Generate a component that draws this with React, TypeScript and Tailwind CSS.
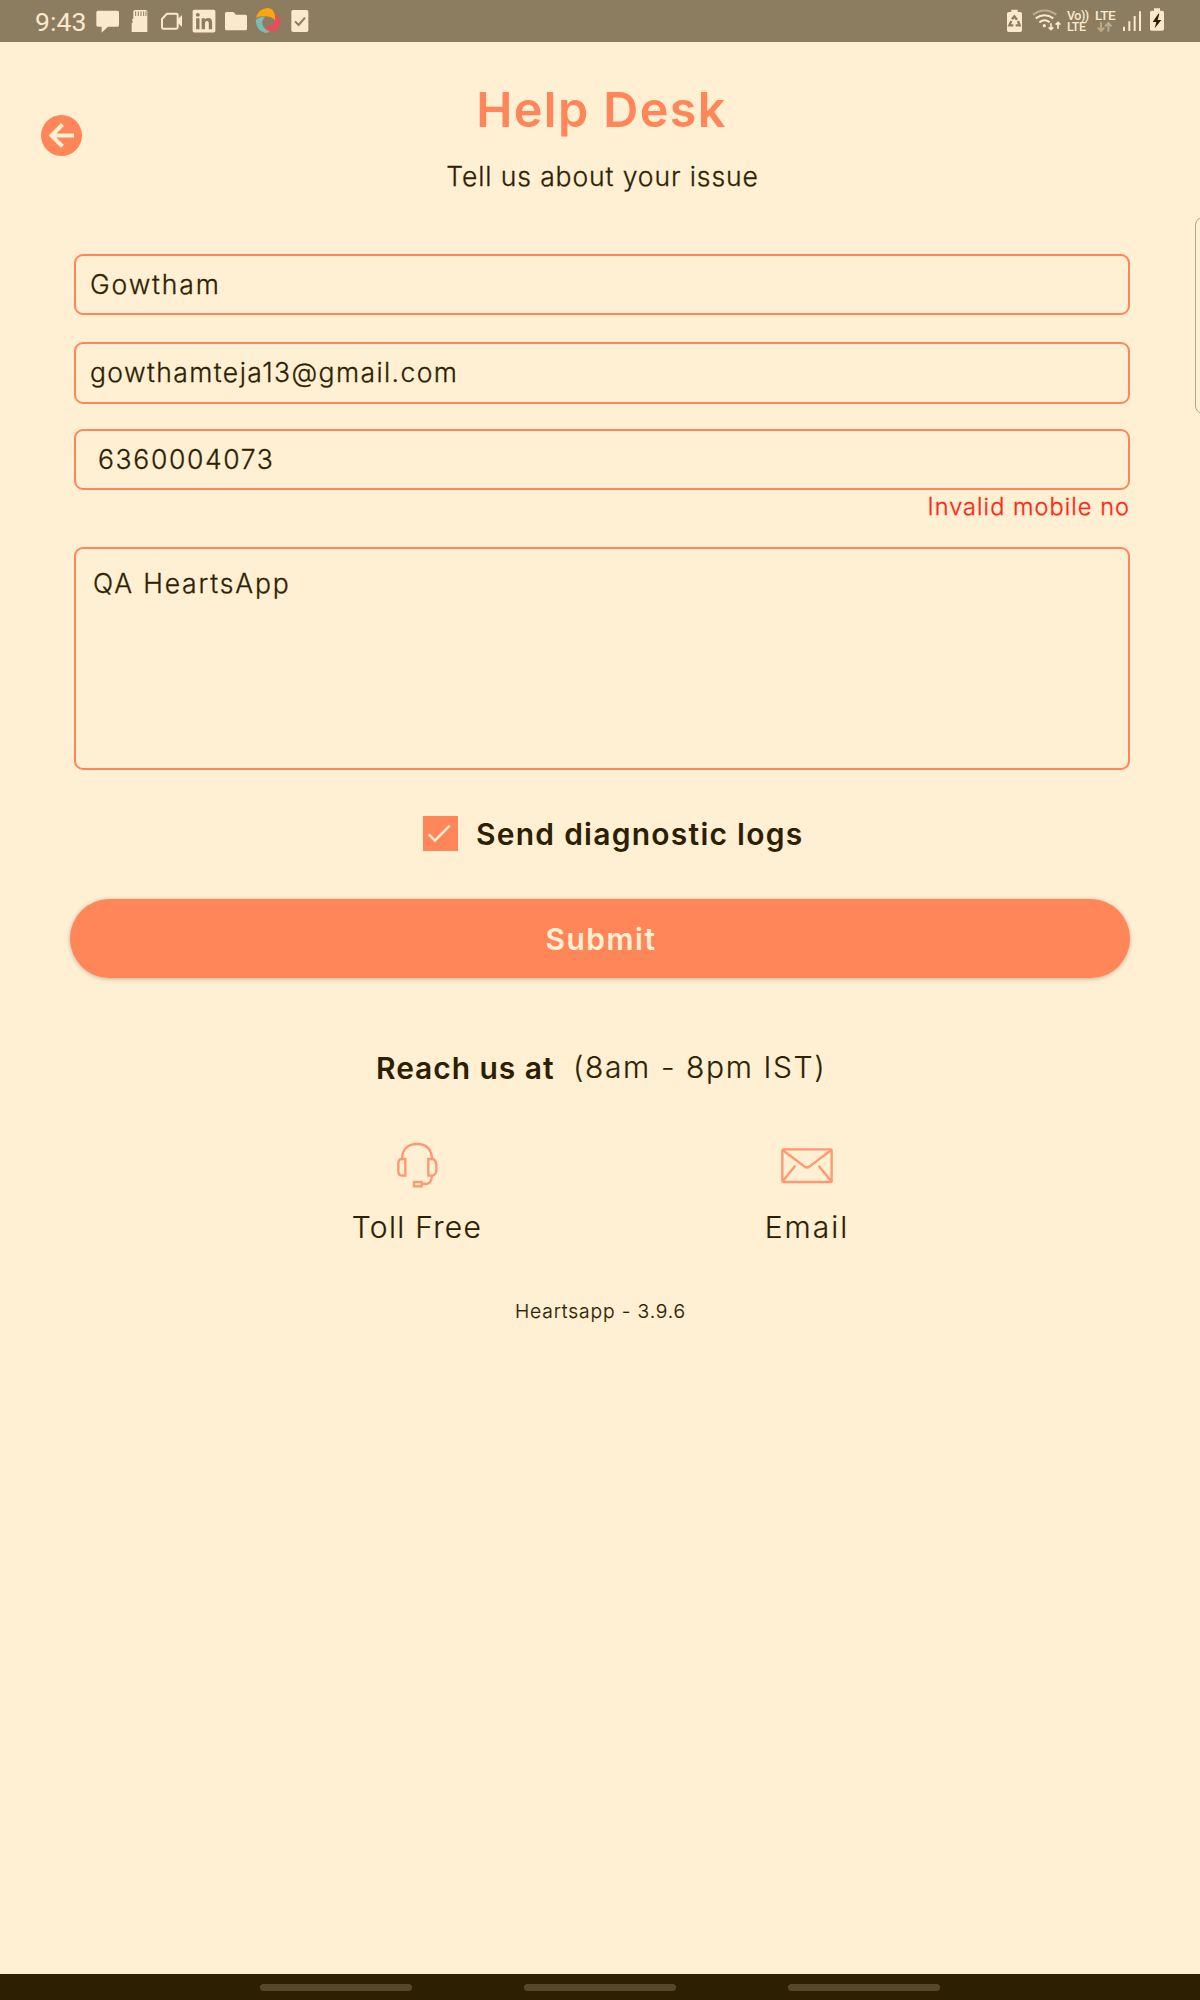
import React from "react";
import { FaLinkedin } from "react-icons/fa";

const CREAM = "#fbe9cb";

/* Status bar glyph: 3 view box units per pixel, full bar height. */
function Glyph({ x, w, children }: { x: number; w: number; children: React.ReactNode }) {
  return (
    <svg width={w / 3} height={42} viewBox={`${x} 0 ${w} 126`} fill={CREAM} className="block shrink-0">
      {children}
    </svg>
  );
}

function StatusBar() {
  return (
    <header className="flex h-[42px] shrink-0 items-center justify-between bg-[#8c7d60]">
      <div className="flex h-full items-center">
        <span className="w-[93px] pl-[35px] pt-px font-[Roboto] text-[26.5px] leading-[42px] tracking-[0.1px] text-[#fbe9cb]">9:43</span>
        <Glyph x={280} w={95}>
          <path d="M295 32h58q5 0 5 5v38q0 5-5 5h-28l-19 18v-18h-11q-5 0-5-5V37q0-5 5-5z" />
        </Glyph>
        <Glyph x={375} w={85}>
          <path d="M405 30h32q5 0 5 5v61h-47V70l4-4-3-6 4-5V35q0-5 5-5z" />
          <path d="M407 34v14M415 34v14M423 34v14M431 34v14M438 34v14" stroke="#8c7d60" strokeWidth="3" />
        </Glyph>
        <Glyph x={460} w={105}>
          <path d="M502 41h28q4 0 4 4v37q0 4-4 4h-40q-3 0-3-4V57z" fill="none" stroke={CREAM} strokeWidth="6" strokeLinejoin="round" />
          <path d="M534 58l13-13v36l-13-13z" />
        </Glyph>
        <span className="flex w-[32px] justify-center pl-px">
          <FaLinkedin size={26} color={CREAM} />
        </span>
        <Glyph x={660} w={95}>
          <path d="M680 36h20l8 8h28q5 0 5 5v37q0 5-5 5h-56q-5 0-5-5V41q0-5 5-5z" />
        </Glyph>
        <Glyph x={755} w={95}>
          <path d="M767 53Q775 25 803 24q20 2 22 30v8q-10-12-27-13-17-1-31 4z" fill="#fba50f" />
          <path d="M825 39q16 11 15 32-5 22-28 24-18 0-29-13 18 4 32-6 14-13 10-37z" fill="#ec4b5e" />
          <path d="M766 60q10-11 29-10-12 10-8 26 6 14 21 18-4 5-14 4-26-5-28-38z" fill="#79bdb6" />
        </Glyph>
        <Glyph x={850} w={100}>
          <rect x="875" y="30" width="51" height="66" rx="5" />
          <path d="M886 64l11 11 19-22" fill="none" stroke="#8c7d60" strokeWidth="6" />
        </Glyph>
      </div>
      <div className="flex h-full items-center pr-[30px]">
        <Glyph x={60} w={85}>
          <path d="M94 29h19v7h8q5 0 5 5v50q0 5-5 5H86q-5 0-5-5V41q0-5 5-5h8z" />
          <path d="M96 58l7-9 8 10M114 63l5 13h-12M100 76H88l6-13" fill="none" stroke="#8c7d60" strokeWidth="7" />
        </Glyph>
        <Glyph x={145} w={110}>
          <g fill="none" stroke={CREAM} strokeWidth="6">
            <path d="M160 44q35-25 70 0" opacity=".45" />
            <path d="M168 55q27-19 53 0M179 67q16-12 31 0" />
            <path d="M214 70v18M207 82l7 7 7-7M235 86V67M228 74l7-7 7 7" strokeWidth="5" />
          </g>
          <circle cx="194" cy="77" r="5" />
        </Glyph>
        <div className="flex w-[27px] flex-col pl-[2px] font-[Roboto] text-[12.5px] leading-[11.5px] font-medium text-[#fbe9cb]">
          <span className="tracking-[-0.5px]">Vo))</span>
          <span className="tracking-[-0.4px]">LTE</span>
        </div>
        <div className="flex w-[28px] flex-col pl-[3px] font-[Roboto] text-[13.5px] leading-[12px] font-medium text-[#fbe9cb]">
          <span className="tracking-[-0.4px]">LTE</span>
          <svg width="18" height="12" viewBox="0 0 54 36" fill="none" stroke="#baab8d" strokeWidth="6">
            <path d="M18 4v26M8 20l10 10 10-10M40 32V6M30 16L40 6l10 10" />
          </svg>
        </div>
        <Glyph x={420} w={75}>
          <path d="M432 80v13M448 64v29M464 48v45M480 34v59" stroke={CREAM} strokeWidth="6" />
        </Glyph>
        <Glyph x={495} w={75}>
          <path d="M522 25h18v7h7q5 0 5 5v50q0 5-5 5h-32q-5 0-5-5V37q0-5 5-5h7z" />
          <path d="M535 41l-17 25h11l-5 19 20-25h-11l5-19z" fill="#2d1f02" />
        </Glyph>
      </div>
    </header>
  );
}

function Headset() {
  return (
    <svg width="42" height="48" viewBox="0 0 126 144" fill="none" stroke="#ff9871" strokeWidth="7" className="block">
      <path d="M18 50C19 20 37 6 63 6s43 14 45 44" />
      <path d="M28 51v50H17Q7 100 7 88V66q0-15 10-15zM97 51v50h11q10-1 13-13V66q-3-15-13-15z" />
      <path d="M108 102q-2 24-19 24H76" />
      <rect x="54" y="120" width="23" height="13" />
    </svg>
  );
}

function Envelope() {
  return (
    <svg width="52" height="36" viewBox="0 0 156 108" fill="none" stroke="#ff9871" strokeWidth="7" className="block">
      <rect x="4" y="4" width="148" height="98" rx="4" />
      <path d="M5 6l65 49q8 7 16 0l65-49M5 100l38-47M151 100l-38-47" />
    </svg>
  );
}

export default function App() {
  return (
    <div className="relative flex h-[2000px] w-[1200px] flex-col overflow-hidden bg-[#ffefd3] font-[Inter,sans-serif] text-[#2d1f02]">
      <StatusBar />
      <div className="absolute top-[217px] left-[1195px] h-[197px] w-4 rounded-[9px] border border-[#b5a685]" />

      <main className="flex grow flex-col">
        <section className="grid h-[212px] grid-cols-[70px_1fr_70px]">
          <button aria-label="Back" className="mt-[73px] ml-[41px] h-[41px] w-[41px]">
            <svg width="41" height="41" viewBox="0 0 41 41" className="block">
              <circle cx="20.5" cy="20.5" r="20.5" fill="#ff8659" />
              <path d="M33 20.5H11M21.500 9.500L10.500 20.500l11 11" fill="none" stroke="#ffefd3" strokeWidth="4" />
            </svg>
          </button>
          <div className="text-center">
            <h1 className="mt-[38px] h-[60px] pl-[3px] text-[48.5px] leading-[60px] font-semibold tracking-[1.4px] whitespace-nowrap text-[#ff8659]">Help Desk</h1>
            <p className="mt-[17px] pl-[5px] text-[26.5px] leading-[39px] font-light tracking-[0.9px] whitespace-nowrap [-webkit-text-stroke:0.3px]">Tell us about your issue</p>
          </div>
        </section>

        <form className="flex flex-col pr-[70px] pl-[74px] text-[26.5px] leading-[56px] font-light [-webkit-text-stroke:0.3px]">
          <div className="h-[61px] rounded-[9px] border-2 border-[#ff8659] pl-[14px] tracking-[1.85px]">Gowtham</div>
          <div className="mt-[27px] h-[62px] rounded-[9px] border-2 border-[#ff8659] pl-[14px] tracking-[1.4px]">gowthamteja13@gmail.com</div>
          <div className="mt-[25px] h-[61px] rounded-[9px] border-2 border-[#ff8659] pl-[22px] tracking-[1.65px]">6360004073</div>
          <p className="h-[57px] pt-[2px] text-right text-[23.500px] leading-[30px] tracking-[1.05px] text-[#ff2613]">Invalid mobile no</p>
          <div className="h-[223px] rounded-[9px] border-2 border-[#ff8659] pt-[6px] pl-[17px] tracking-[1.85px]">QA HeartsApp</div>
        </form>

        <label className="mt-[46px] flex h-[35px] items-center pl-[423px]">
          <svg width="35" height="35" viewBox="0 0 105 105" className="block bg-[#ff8659]">
            <path d="M17 55l19 19 44-45" fill="none" stroke="#ffefd3" strokeWidth="7" />
          </svg>
          <span className="pl-[18px] text-[30px] leading-[36px] font-semibold tracking-[1.25px] whitespace-nowrap">Send diagnostic logs</span>
        </label>

        <button className="mt-[48px] mr-[70px] ml-[70px] h-[79px] rounded-full bg-[#ff8659] pl-[2px] text-[30px] leading-[81px] font-semibold tracking-[1.5px] text-[#ffefd3] shadow-[0_1px_4px_rgba(80,60,20,0.35)]">Submit</button>

        <div className="mt-[70px] flex h-[40px] pl-[376px] text-[30px] leading-[40px] whitespace-nowrap">
          <span className="w-[197px] font-semibold tracking-[0.95px]">Reach us at</span>
          <span className="leading-[38px] font-light tracking-[1.6px] [-webkit-text-stroke:0.2px]">(8am - 8pm IST)</span>
        </div>

        <div className="mt-[54px] flex h-[108px] pl-[317px] text-[30px] leading-[40px] font-light [-webkit-text-stroke:0.2px]">
          <div className="flex w-[200px] flex-col items-center">
            <Headset />
            <span className="mt-[17px] tracking-[1.3px]">Toll Free</span>
          </div>
          <div className="ml-[190px] flex w-[200px] flex-col items-center pt-[6px]">
            <Envelope />
            <span className="mt-[23px] tracking-[2px]">Email</span>
          </div>
        </div>

        <p className="mt-[46px] pl-px text-center text-[19.300px] leading-[30px] font-light tracking-[0.85px] [-webkit-text-stroke:0.2px]">Heartsapp - 3.9.6</p>
      </main>

      <footer className="flex h-[26px] shrink-0 justify-center gap-[112px] bg-[#2d1f02] pt-[10px]">
        <div className="h-[7px] w-[152px] rounded-full bg-[#574729]" />
        <div className="h-[7px] w-[152px] rounded-full bg-[#574729]" />
        <div className="h-[7px] w-[152px] rounded-full bg-[#574729]" />
      </footer>
    </div>
  );
}
